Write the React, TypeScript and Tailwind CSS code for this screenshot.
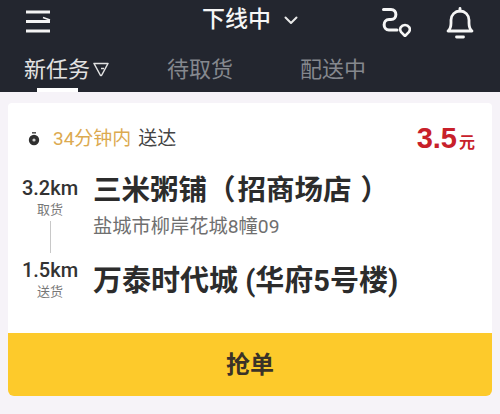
const cjk = "font-['Roboto','Noto_Sans_CJK_SC',sans-serif]";

function Menu() {
  return (
    <svg width="26" height="26" viewBox="0 0 26 26" fill="none" stroke="#f4f4f4" strokeWidth="3">
      <path d="M0 3H24" />
      <path d="M0 12.5H24" />
      <path d="M0 22H24" />
      <path d="M17 8.5L24 11" strokeWidth="1.5" />
    </svg>
  );
}

function Route() {
  return (
    <svg width="30" height="30" viewBox="0 0 30 30" fill="none" stroke="#f6f6f6" strokeWidth="3" strokeLinecap="round">
      <path d="M2.5 2.5H10C16.5 2.5 16.5 12.5 10 12.5H8C1.5 12.5 1.5 23 8 23H16" />
      <path d="M24 29L20.2 25.2C17.5 21.5 20.5 18 24 18C27.5 18 30.5 21.5 27.8 25.2Z" strokeWidth="2.6" strokeLinejoin="round" />
    </svg>
  );
}

function Bell() {
  return (
    <svg width="28" height="32" viewBox="0 0 28 32" fill="none" stroke="#f6f6f6" strokeWidth="2.8" strokeLinecap="round" strokeLinejoin="round">
      <path d="M14 1.5V4" />
      <path d="M2 24H26C23.5 22 23 20 23 16V13C23 8 19 4 14 4C9 4 5 8 5 13V16C5 20 4.5 22 2 24Z" />
      <path d="M10.5 30H17.5" />
    </svg>
  );
}

function Stopwatch() {
  return (
    <svg width="12" height="14" viewBox="0 0 12 14">
      <rect x="4" y="0" width="4" height="1.6" fill="#555" />
      <circle cx="6" cy="8" r="5.2" fill="#2f2f2f" />
      <circle cx="6" cy="8" r="1.6" fill="#cfcfcf" />
    </svg>
  );
}

function Filter() {
  return (
    <svg width="16" height="15" viewBox="0 0 16 15" fill="none" stroke="#e2e2e2" strokeWidth="1.5" strokeLinejoin="round">
      <path d="M1 1.5H15L8.5 13.5H7.5Z" />
      <path d="M8 6.5L11 6.5" />
    </svg>
  );
}

function Stop({ km, label }: { km: string; label: string }) {
  return (
    <div className="ml-[15px] w-[54px] shrink-0 flex flex-col items-center">
      <div className="text-[20px] leading-[22px] font-medium text-[#333]">{km}</div>
      <div className="text-[13px] leading-[18px] mt-[2px] text-[#777]">{label}</div>
    </div>
  );
}

export default function App() {
  return (
    <div className={`w-[500px] h-[414px] overflow-hidden bg-[#f6f3f8] ${cjk}`}>
      <header className="h-[92px] bg-[#23262f] flex flex-col">
        <div className="h-[50px] flex items-center relative">
          <div className="ml-[26px] mt-[-7px]"><Menu /></div>
          <div className="absolute left-[202px] top-[5px] flex items-center gap-[13px] text-[23px] leading-[30px] font-medium text-[#f6f6f6]">
            下线中
            <svg width="14" height="9" viewBox="0 0 14 9" fill="none" stroke="#e8e8e8" strokeWidth="2" strokeLinecap="round" strokeLinejoin="round"><path d="M1.5 1.5L7 7L12.5 1.5" /></svg>
          </div>
          <div className="ml-auto flex items-start gap-[35px] mr-[26px] mt-[-4px]">
            <Route />
            <Bell />
          </div>
        </div>
        <div className="flex-1 relative flex items-center text-[22px] pb-[3px]">
          <div className="ml-[24px] flex items-center gap-[3px] text-[#e2e2e2]">新任务<Filter /></div>
          <div className="ml-[58px] text-[#85888e]">待取货</div>
          <div className="ml-[67px] text-[#85888e]">配送中</div>
          <div className="absolute left-[37px] bottom-0 w-[41px] h-[4px] bg-white" />
        </div>
      </header>
      <main className="mx-[8px] mt-[11px] h-[293px] flex flex-col">
        <section className="flex-1 bg-white rounded-t-[4px] flex flex-col">
          <div className="h-[70px] pt-[2px] flex items-center">
            <div className="ml-[20px]"><Stopwatch /></div>
            <div className="ml-[13px] text-[19px] text-[#dcaa50]">34分钟内</div>
            <div className="ml-[7px] text-[19px] text-[#444]">送达</div>
            <div className="ml-auto mr-[17px] flex items-baseline gap-[2px] text-[#c8202a] font-bold font-['Liberation_Sans','Noto_Sans_CJK_SC',sans-serif]">
              <span className="text-[29px] leading-[30px]">3.5</span>
              <span className="text-[16px]">元</span>
            </div>
          </div>
          <div className="flex mt-[4px]">
            <Stop km="3.2km" label="取货" />
            <div className="ml-[16px] -mt-[4px]">
              <div className="text-[28.5px] leading-[36px] font-bold text-[#2c2c2c] whitespace-nowrap">
                三米粥铺<span className="mr-[2px]">（</span>招商场店<span className="ml-[9px]">）</span>
              </div>
              <div className="text-[19.25px] leading-[24px] mt-[6px] text-[#6f6f6f]">盐城市柳岸花城8幢09</div>
            </div>
          </div>
          <div className="ml-[15px] w-[54px] flex justify-center -mt-[18px]"><div className="w-[1px] h-[32px] bg-[#c8c8c8]" /></div>
          <div className="flex mt-[6px]">
            <Stop km="1.5km" label="送货" />
            <div className="ml-[16px] mt-[4px] text-[29px] leading-[36px] font-bold text-[#2c2c2c] whitespace-nowrap">万泰时代城 (华府5号楼)</div>
          </div>
        </section>
        <button className="h-[63px] shrink-0 bg-[#fdca2b] rounded-b-[6px] text-[#3a3228] text-[24px] font-bold">抢单</button>
      </main>
    </div>
  );
}
